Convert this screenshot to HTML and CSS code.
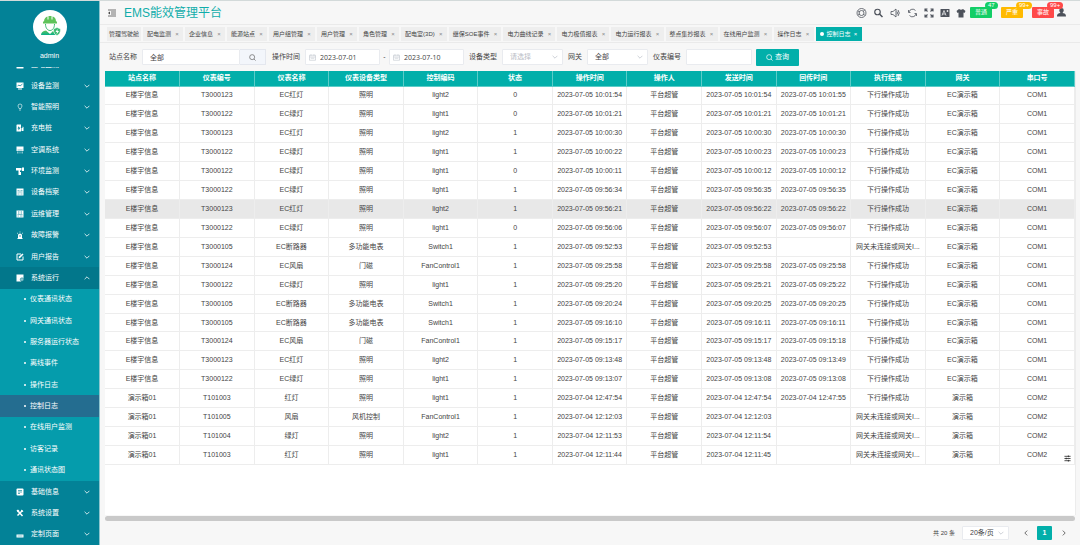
FILE: index.html
```html
<!DOCTYPE html>
<html lang="zh-CN">
<head>
<meta charset="utf-8">
<title>EMS能效管理平台</title>
<link rel="stylesheet" href="styles.css">
</head>
<body>
<svg class="defs" aria-hidden="true">
  <symbol id="down" viewBox="0 0 10 10"><path d="M1 3l4 4 4-4" fill="none" stroke="currentColor" stroke-width="1.300"/></symbol>
  <symbol id="cal" viewBox="0 0 14 14"><path d="M1 2.5h12v10H1zM1 6h12M4 .5v3M10 .5v3M3.500 8.500h7" fill="none" stroke="currentColor" stroke-width="1.200"/></symbol>
  <symbol id="find" viewBox="0 0 14 14"><circle cx="6.300" cy="6.300" r="5" fill="none" stroke="currentColor" stroke-width="1.400"/><path d="M10 10l3.200 3.200" stroke="currentColor" stroke-width="1.400"/></symbol>
</svg>
<div class="app">
  <aside class="side">
    <div class="profile">
      <svg class="avatar" viewBox="0 0 68 68"><defs><linearGradient id="g" x1="0" y1="0" x2="0" y2="1"><stop offset="0" stop-color="#5fc35a"/><stop offset="1" stop-color="#08b08c"/></linearGradient></defs><circle cx="34" cy="34" r="34" fill="#fff"/><path d="M22 23c0-6 4-9 7-10v6h2v-7h6v7h2v-6c4 1 7 4 7 10h2v4H20v-4z" fill="#5fc35a"/><path d="M25 28c0 8 4 13 9 13s9-5 9-13" fill="none" stroke="#39ba72" stroke-width="2"/><path d="M16 50c0-5 4-8 10-9l8 7 6-6 2 2c0 3 2 5 4 6z" fill="url(#g)"/><path d="M41 38l7-3 7 3c0 7-2 11-7 13-5-2-7-6-7-13z" fill="#39ba72" stroke="#fff"/><path d="M49 38l-4 6h3l-1 5 5-7h-3z" fill="#fff"/></svg>
      <span>admin</span>
    </div>
    <nav class="menu">
      <div class="peek"><a class="item" href="#"><svg class="ico" viewBox="0 0 16 16"><rect x="1" y="2" width="14" height="13" rx="1" fill="currentColor"/></svg>配电监测</a></div>
      <ul class="list">
        <li><a class="item" href="#"><svg class="ico" viewBox="0 0 16 16"><path d="M1 1h14v11H1zM4 13h8v2H4z" fill="currentColor"/><path d="M3 8l3-2 2 2 5-4" fill="none" stroke="#038297" stroke-width="1.500"/></svg>设备监测<svg class="arr"><use href="#down"/></svg></a></li>
        <li><a class="item" href="#"><svg class="ico" viewBox="0 0 16 16"><path d="M6 11c0-2-2-3-2-5a4 4 0 0 1 8 0c0 2-2 3-2 5zM6 14h4" fill="none" stroke="currentColor" stroke-width="1.200"/></svg>智能照明<svg class="arr"><use href="#down"/></svg></a></li>
        <li><a class="item" href="#"><svg class="ico" viewBox="0 0 16 16"><path d="M2 1h8v14H1V2zM11 8h2V5l2 1v8h-4z" fill="currentColor"/><path d="M6 4L3 9h2v4l4-6H6z" fill="#038297"/></svg>充电桩<svg class="arr"><use href="#down"/></svg></a></li>
        <li><a class="item" href="#"><svg class="ico" viewBox="0 0 16 16"><path d="M1 1h14v9H1z" fill="currentColor"/><path d="M3 8h10" stroke="#038297"/><path d="M3 11v4M6 11v4M10 11v4M13 11v4" stroke="currentColor"/></svg>空调系统<svg class="arr"><use href="#down"/></svg></a></li>
        <li><a class="item" href="#"><svg class="ico" viewBox="0 0 16 16"><path d="M0 2h11v5H0zM12 1h4v7h-4zM5 7h3v3h2v6H5z" fill="currentColor"/></svg>环境监测<svg class="arr"><use href="#down"/></svg></a></li>
        <li><a class="item" href="#"><svg class="ico" viewBox="0 0 16 16"><path d="M1 1h14v14H1z" fill="currentColor"/><path d="M3 5h4M9 5h4M3 8h10M3 12h4M9 12h4" stroke="#038297"/></svg>设备档案<svg class="arr"><use href="#down"/></svg></a></li>
        <li><a class="item" href="#"><svg class="ico" viewBox="0 0 16 16"><path d="M1 1h14v14H1z" fill="currentColor"/><path d="M3 9h10M5.500 2v6M10.500 2v6M3 12h3M8 12h5" stroke="#038297"/></svg>运维管理<svg class="arr"><use href="#down"/></svg></a></li>
        <li><a class="item" href="#"><svg class="ico" viewBox="0 0 16 16"><path d="M4 14V9a4 4 0 0 1 8 0v5h1v2H3v-2z" fill="currentColor"/><path d="M8 1v2M2 4l2 1M14 4l-2 1" stroke="currentColor" stroke-width="1.300"/><path d="M8 8v4" stroke="#038297" stroke-width="1.500"/></svg>故障报警<svg class="arr"><use href="#down"/></svg></a></li>
        <li><a class="item" href="#"><svg class="ico" viewBox="0 0 16 16"><path d="M10 2H2v12h12V7" fill="none" stroke="currentColor" stroke-width="2"/><path d="M5 11l1-4 7-6 2 2-7 7z" fill="currentColor"/></svg>用户报告<svg class="arr"><use href="#down"/></svg></a></li>
        <li class="open">
          <a class="item" href="#"><svg class="ico" viewBox="0 0 16 16"><path d="M1 1h14v8l-5 6H1z" fill="currentColor"/><circle cx="12" cy="11" r="3.500" fill="#8cc6d0" stroke="#02778b"/></svg>系统运行<svg class="arr up"><use href="#down"/></svg></a>
          <ul class="sub">
            <li><a href="#">仪表通讯状态</a></li>
            <li><a href="#">网关通讯状态</a></li>
            <li><a href="#">服务器运行状态</a></li>
            <li><a href="#">离线事件</a></li>
            <li><a href="#">操作日志</a></li>
            <li class="on"><a href="#">控制日志</a></li>
            <li><a href="#">在线用户监测</a></li>
            <li><a href="#">访客记录</a></li>
            <li><a href="#">通讯状态图</a></li>
          </ul>
        </li>
        <li><a class="item" href="#"><svg class="ico" viewBox="0 0 16 16"><rect x="1" y="1" width="14" height="14" rx="2" fill="currentColor"/><path d="M4 5h8M4 8h8M4 11h4" stroke="#038297" stroke-width="1.300"/></svg>基础信息<svg class="arr"><use href="#down"/></svg></a></li>
        <li><a class="item" href="#"><svg class="ico" viewBox="0 0 16 16"><path d="M3 3l10 11M13 3L3 13" stroke="currentColor" stroke-width="3"/><path d="M1 3l3-2 3 3-3 3zM11 1l4 4-3 1-2-2z" fill="currentColor"/></svg>系统设置<svg class="arr"><use href="#down"/></svg></a></li>
        <li><a class="item" href="#"><svg class="ico" viewBox="0 0 16 16"><path d="M1 9h14v6H1z" fill="currentColor"/><path d="M3 12h10" stroke="#038297"/></svg>定制页面<svg class="arr"><use href="#down"/></svg></a></li>
      </ul>
    </nav>
  </aside>
  <main class="main">
    <header class="top">
      <svg class="burger" viewBox="0 0 16 16"><path d="M0 2h16M6 6h10M6 10h10M0 14h16" stroke="#444" stroke-width="1.500"/><path d="M4 5v6L0 8z" fill="#444"/></svg>
      <h1>EMS能效管理平台</h1>
      <div class="tools">
        <svg viewBox="0 0 20 20"><circle cx="10" cy="10" r="9" fill="none" stroke="currentColor" stroke-width="1.600"/><circle cx="10" cy="10" r="5" fill="none" stroke="currentColor" stroke-width="1.600"/><path d="M3 6l3 2M14 6l3-3M3 14l3-2M14 12l3 3" stroke="currentColor" stroke-width="1.500"/></svg>
        <svg viewBox="0 0 20 20"><circle cx="8" cy="8" r="5.500" fill="none" stroke="currentColor" stroke-width="2.400"/><path d="M12 12l6 6" stroke="currentColor" stroke-width="3"/></svg>
        <svg viewBox="0 0 20 20"><path d="M1 7h4l6-5v16l-6-5H1z" fill="none" stroke="currentColor" stroke-width="1.600"/><path d="M13 7q2 3 0 6M15 4q5 6 0 12" fill="none" stroke="currentColor" stroke-width="1.700"/></svg>
        <svg viewBox="0 0 20 20"><path d="M3 8a7.500 7.500 0 0 1 13-3M17 12a7.500 7.500 0 0 1-13 3M2 4v5h4M18 16v-5h-4" fill="none" stroke="currentColor" stroke-width="1.600"/></svg>
        <svg viewBox="0 0 20 20"><path d="M2 7V2h5M13 2h5v5M18 13v5h-5M7 18H2v-5M2 2l5 5M18 2l-5 5M18 18l-5-5M2 18l5-5" fill="none" stroke="currentColor" stroke-width="2.200"/></svg>
        <svg viewBox="0 0 20 20"><rect x="1" y="2" width="18" height="16" rx="1" fill="currentColor"/><path d="M4 15l4-10 4 10M5 12h6M13 6h4M15 4v4" fill="none" stroke="#f7f7f7" stroke-width="1.500"/></svg>
        <svg viewBox="0 0 20 20"><path d="M6 2q4 3 8 0l5 4-2 4-2-1v10H5V9l-2 1-2-4z" fill="currentColor"/></svg>
      </div>
      <div class="alarms">
        <button class="alarm ok">普通<span>47</span></button>
        <button class="alarm warn">严重<span>99+</span></button>
        <button class="alarm bad">事故<span>99+</span></button>
      </div>
      <svg class="user" viewBox="0 0 16 16"><path d="M8 0a4 4 0 0 1 4 4c0 3-2 4-2 5 3 1 6 1 6 6H0c0-5 3-5 6-6 0-1-2-2-2-5a4 4 0 0 1 4-4z" fill="#4d525b"/></svg>
    </header>
    <nav class="tabs">
      <a href="#">管理驾驶舱</a><a href="#">配电监测<i>×</i></a><a href="#">企业信息<i>×</i></a><a href="#">能源站点<i>×</i></a><a href="#">用户组管理<i>×</i></a><a href="#">用户管理<i>×</i></a><a href="#">角色管理<i>×</i></a><a href="#">配电室(3D)<i>×</i></a><a href="#">继保SOE事件<i>×</i></a><a href="#">电力曲线记录<i>×</i></a><a href="#">电力极值报表<i>×</i></a><a href="#">电力运行报表<i>×</i></a><a href="#">整点集抄报表<i>×</i></a><a href="#">在线用户监测<i>×</i></a><a href="#">操作日志<i>×</i></a><a href="#" class="cur">控制日志<i>×</i></a>
    </nav>
    <form class="filters">
      <label for="site">站点名称</label>
      <div class="group"><input id="site" class="site" value="全部"><button type="button" aria-label="搜索"><svg><use href="#find"/></svg></button></div>
      <label for="from">操作时间</label>
      <div class="date"><svg><use href="#cal"/></svg><input id="from" value="2023-07-01"></div>
      <span class="dash">-</span>
      <div class="date"><svg><use href="#cal"/></svg><input aria-label="结束时间" value="2023-07-10"></div>
      <label for="type">设备类型</label>
      <div class="pick"><select id="type" class="empty"><option>请选择</option></select><svg><use href="#down"/></svg></div>
      <label for="gate">网关</label>
      <div class="pick"><select id="gate"><option>全部</option></select><svg><use href="#down"/></svg></div>
      <label for="meter">仪表编号</label>
      <input id="meter" class="meter">
      <button type="button" class="query"><svg><use href="#find"/></svg>查询</button>
    </form>
    <section class="card">
      <table>
        <thead><tr><th>站点名称</th><th>仪表编号</th><th>仪表名称</th><th>仪表设备类型</th><th>控制编码</th><th>状态</th><th>操作时间</th><th>操作人</th><th>发送时间</th><th>回传时间</th><th>执行结果</th><th>网关</th><th>串口号</th></tr></thead>
        <tbody id="rows"></tbody>
      </table>
      <svg class="tune" viewBox="0 0 16 16"><path d="M1 3h14M1 8h14M1 13h14M10 1v4M5 6v4M10 11v4" stroke="#222" stroke-width="1.800"/></svg>
    </section>
    <div class="bar"></div>
    <footer class="pager">
      <span>共 20 条</span>
      <div class="pick size"><select aria-label="每页条数"><option>20条/页</option></select><svg><use href="#down"/></svg></div>
      <button class="prev" aria-label="上一页"><svg><use href="#down"/></svg></button>
      <button class="page">1</button>
      <button class="next" aria-label="下一页"><svg><use href="#down"/></svg></button>
    </footer>
  </main>
</div>
<script src="rows.js"></script>
</body>
</html>
```
FILE: styles.css
```css
* { box-sizing: border-box; }
body { margin: 0; background: #f7f7f7; color: #444; font: 7px/10px "Liberation Sans", "Noto Sans CJK SC", sans-serif; }
a { color: inherit; text-decoration: none; }
ul { margin: 0; padding: 0; list-style: none; }
button, input, select { font: inherit; color: inherit; margin: 0; }
.defs { position: absolute; width: 0; height: 0; }
.app { display: grid; grid-template-columns: 100px minmax(0, 1fr); min-height: 100vh; border-top: 1px solid #d3dada; }

.side { display: flex; flex-direction: column; background: #038297; color: #fff; border-right: 1px solid #8ec5ce; }
.profile { display: flex; flex-direction: column; align-items: center; gap: 7px; padding-top: 9px; height: 66px; }
.avatar { width: 34px; height: 34px; }
.menu { flex: 1; display: flex; flex-direction: column; }
.peek { height: 8px; overflow: hidden; display: flex; flex-direction: column; justify-content: flex-end; }
.peek .item { flex: none; }
.list, .sub, .open { display: flex; flex-direction: column; }
.list { flex: 1; }
.list > li, .sub > li { flex: 1 1 21px; display: flex; flex-direction: column; }
.list > .open { flex: 10 1 210px; }
.item { flex: 1 1 21px; min-height: 21px; display: flex; align-items: center; gap: 7px; padding: 0 9px 0 16px; }
.ico { width: 8px; height: 8px; }
.arr { width: 6px; height: 6px; margin-left: auto; }
.arr.up { transform: rotate(180deg); }
.open > .item { background: #02778b; }
.sub { flex: 9 1 189px; background: #059cac; }
.sub a { flex: 1; display: flex; align-items: center; gap: 4px; padding-left: 24px; }
.sub a::before { content: ""; width: 2px; height: 2px; border-radius: 1px; background: #fff; }
.sub .on { background: #246d90; }

.main { display: flex; flex-direction: column; min-width: 0; }
.top { height: 24px; display: flex; align-items: center; padding: 0 14px 0 8px; border-bottom: 1px solid #eaeaea; }
.burger { width: 8px; height: 8px; }
h1 { flex: 1; margin: 0 0 0 8px; font-size: 12px; line-height: 18px; font-weight: 400; color: #11adaa; }
.tools { display: flex; gap: 6px; color: #4d525b; }
.tools svg { width: 10px; height: 10px; }
.tools svg:nth-child(-n+4) { width: 11px; }
.alarms { display: flex; gap: 9px; margin: 0 3px 0 4px; }
.alarm { position: relative; width: 22px; height: 11px; padding: 0; border: 0; border-radius: 1px; color: #fff; font-size: 6px; line-height: 11px; }
.alarm span { position: absolute; left: 15px; top: -5px; padding: 0 3px; border-radius: 4px; background: inherit; font-size: 6px; line-height: 7px; }
.ok { background: #13ce66; }
.warn { background: #ffba00; }
.bad { background: #ff4949; }
.user { width: 9px; height: 9px; }

.tabs { display: flex; align-items: center; gap: 2px; height: 18px; padding-left: 7px; border-bottom: 1px solid #eaeaea; font-size: 6px; white-space: nowrap; }
.tabs a { display: flex; align-items: center; gap: 4px; height: 14px; padding: 0 4px; background: #eee; }
.tabs a:first-child { padding: 0 2px; }
.tabs i { width: 4px; text-align: center; font-style: normal; color: #888; }
.tabs .cur { background: #02afaa; color: #fff; gap: 3px; }
.tabs .cur i { color: #fff; }
.tabs .cur::before { content: ""; width: 4px; height: 4px; border-radius: 2px; background: #fff; }

.filters { display: flex; align-items: center; height: 28px; padding-left: 9px; }
.filters label { margin-right: 5px; white-space: nowrap; }
.filters input, .pick select { height: 16px; padding: 0 7px; border: 1px solid #e9ebef; border-radius: 1px; background: #fff; outline: 0; }
.group { display: flex; margin-right: 6px; }
.filters .site { width: 98px; }
.group button { width: 26px; height: 16px; padding: 0; border: 1px solid #e4e7ee; border-left: 0; background: #f3f6fb; color: #666; display: grid; place-items: center; }
.group svg, .query svg { width: 7px; height: 7px; }
.date { position: relative; }
.date svg { position: absolute; left: 4px; top: 5px; width: 7px; height: 7px; color: #c0c4cc; }
.date input { width: 75px; padding: 0 14px; font-family: "Open Sans", sans-serif; }
.dash { width: 9px; text-align: center; }
.date + label { margin-left: 5px; }
.pick { position: relative; margin-right: 5px; }
.pick select { appearance: none; width: 61px; }
.pick .empty { color: #b9bdc5; }
.pick svg { position: absolute; right: 5px; top: 5px; width: 6px; height: 6px; color: #c0c4cc; pointer-events: none; }
.filters .meter { width: 66px; }
.query { display: flex; align-items: center; justify-content: center; gap: 2px; width: 43px; height: 17px; margin-left: 4px; padding: 0; border: 0; border-radius: 1px; background: #02afaa; color: #fff; }

.card { position: relative; flex: 1; margin: 0 4px 0 5px; background: #fff; border-right: 1px solid #ececec; }
table { width: 100%; height: 394px; table-layout: fixed; border-collapse: collapse; text-align: center; }
th, td { padding: 0 4px; border: 1px solid #ededed; border-top: 0; overflow: hidden; white-space: nowrap; text-overflow: ellipsis; }
th { height: 15px; background: #02afaa; color: #fff; border-color: #5cccc8; }
th:first-child, td:first-child { border-left: 0; }
tr.hover { background: #e8e8e8; }
.tune { position: absolute; right: 4px; top: 384px; width: 7px; height: 7px; }
.bar { height: 5px; margin: 1px 5px 0; border-radius: 3px; background: #c9c9c9; }

.pager { height: 24px; display: flex; align-items: center; justify-content: flex-end; padding-right: 11px; }
.pager span { font-size: 6px; }
.pager .size { margin: 0 11px 0 7px; }
.pager .size select { width: 47px; height: 14px; }
.size svg { top: 4px; }
.pager button { width: 11px; height: 14px; padding: 0; border: 0; background: none; display: grid; place-items: center; }
.pager button svg { width: 6px; height: 6px; }
.prev svg { transform: rotate(90deg); }
.next svg { transform: rotate(-90deg); }
.pager .page { width: 15px; margin: 0 6px; background: #02afaa; color: #fff; font-weight: 700; border-radius: 1px; }
```
FILE: rows.js
```js
// site, meter, name, type, code, state, operated, sent, returned
const E = "E楼宇信息", Y = "演示箱01";
const log = [
  [E, "T3000123", "EC红灯", "照明", "light2", 0, "05 10:01:54", "05 10:01:54", "05 10:01:55"],
  [E, "T3000122", "EC绿灯", "照明", "light1", 0, "05 10:01:21", "05 10:01:21", "05 10:01:21"],
  [E, "T3000123", "EC红灯", "照明", "light2", 1, "05 10:00:30", "05 10:00:30", "05 10:00:30"],
  [E, "T3000122", "EC绿灯", "照明", "light1", 1, "05 10:00:22", "05 10:00:23", "05 10:00:23"],
  [E, "T3000122", "EC绿灯", "照明", "light1", 0, "05 10:00:11", "05 10:00:12", "05 10:00:12"],
  [E, "T3000122", "EC绿灯", "照明", "light1", 1, "05 09:56:34", "05 09:56:35", "05 09:56:35"],
  [E, "T3000123", "EC红灯", "照明", "light2", 1, "05 09:56:21", "05 09:56:22", "05 09:56:22"],
  [E, "T3000122", "EC绿灯", "照明", "light1", 0, "05 09:56:06", "05 09:56:07", "05 09:56:07"],
  [E, "T3000105", "EC断路器", "多功能电表", "Switch1", 1, "05 09:52:53", "05 09:52:53", ""],
  [E, "T3000124", "EC风扇", "门磁", "FanControl1", 1, "05 09:25:58", "05 09:25:58", "05 09:25:58"],
  [E, "T3000122", "EC绿灯", "照明", "light1", 1, "05 09:25:20", "05 09:25:21", "05 09:25:22"],
  [E, "T3000105", "EC断路器", "多功能电表", "Switch1", 1, "05 09:20:24", "05 09:20:25", "05 09:20:25"],
  [E, "T3000105", "EC断路器", "多功能电表", "Switch1", 1, "05 09:16:10", "05 09:16:11", "05 09:16:11"],
  [E, "T3000124", "EC风扇", "门磁", "FanControl1", 1, "05 09:15:17", "05 09:15:17", "05 09:15:18"],
  [E, "T3000123", "EC红灯", "照明", "light2", 1, "05 09:13:48", "05 09:13:48", "05 09:13:49"],
  [E, "T3000122", "EC绿灯", "照明", "light1", 1, "05 09:13:07", "05 09:13:08", "05 09:13:08"],
  [Y, "T101003", "红灯", "照明", "light1", 1, "04 12:47:54", "04 12:47:54", "04 12:47:55"],
  [Y, "T101005", "风扇", "风机控制", "FanControl1", 1, "04 12:12:03", "04 12:12:03", ""],
  [Y, "T101004", "绿灯", "照明", "light2", 1, "04 12:11:53", "04 12:11:54", ""],
  [Y, "T101003", "红灯", "照明", "light1", 1, "04 12:11:44", "04 12:11:45", ""]
];
const day = t => t && "2023-07-" + t;
document.getElementById("rows").innerHTML = log.map((r, i) => {
  const cells = [...r.slice(0, 6), day(r[6]), "平台超管", day(r[7]), day(r[8]),
    r[8] ? "下行操作成功" : "网关未连接或网关I...",
    r[0] === E ? "EC演示箱" : "演示箱", r[0] === E ? "COM1" : "COM2"];
  return `<tr${i === 6 ? ' class="hover"' : ""}>` + cells.map(c => `<td>${c}</td>`).join("") + "</tr>";
}).join("");
```
